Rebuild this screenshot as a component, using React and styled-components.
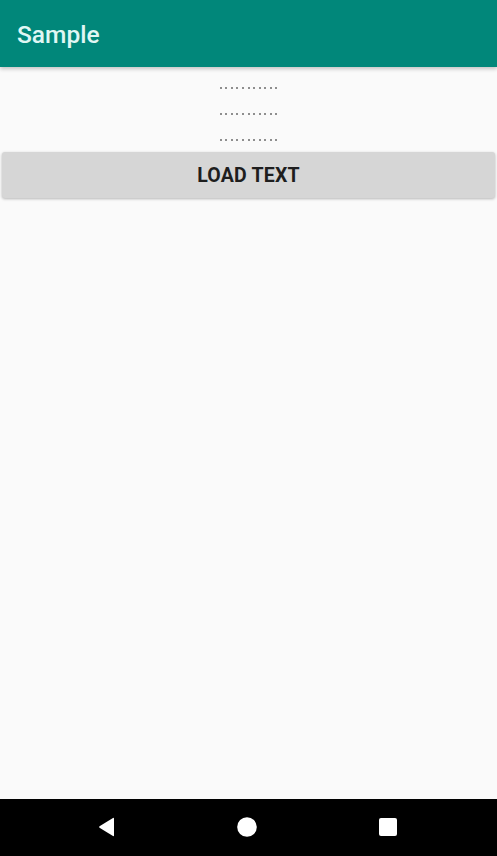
import React from "react";
import styled, { createGlobalStyle } from "styled-components";

const Global = createGlobalStyle`
  html, body {
    margin: 0;
    padding: 0;
    background: #fafafa;
    font-family: Roboto, "Noto Sans", sans-serif;
  }
`;

const Screen = styled.div`
  width: 497px;
  height: 856px;
  display: flex;
  flex-direction: column;
  background: #fafafa;
  overflow: hidden;
`;

const AppBar = styled.header`
  height: 67px;
  flex-shrink: 0;
  background: #01877a;
  display: flex;
  align-items: center;
  padding-left: 17px;
  box-shadow: 0 2px 4px rgba(0, 0, 0, 0.22);
  position: relative;
  z-index: 1;
`;

const Title = styled.h1`
  margin: 0;
  font-size: 24.5px;
  font-weight: 500;
  color: #e0f7f4;
  margin-top: 1px;
`;

const Content = styled.main`
  flex: 1;
  display: flex;
  flex-direction: column;
  align-items: center;
  padding: 10px 2px 0 2px;
`;

const Dots = styled.div`
  height: 26px;
  display: flex;
  gap: 3.6px;
  align-items: flex-start;
  padding-top: 10px;
  box-sizing: border-box;
`;

const Dot = styled.span`
  width: 2px;
  height: 2px;
  border-radius: 50%;
  background: #6a6a6a;
`;

const Button = styled.button`
  margin-top: -3px;
  align-self: stretch;
  height: 46px;
  border: none;
  border-radius: 3px;
  background: #d6d6d6;
  box-shadow: 0 1px 3px rgba(0, 0, 0, 0.28);
  font-family: Roboto, sans-serif;
  font-weight: 700;
  font-size: 19.5px;
  color: #1e1e1e;
  letter-spacing: 0.2px;
`;

const NavBar = styled.nav`
  height: 57px;
  flex-shrink: 0;
  background: #000;
  display: grid;
  grid-template-columns: 98px 18px 121px 20px 122px 18px;
  align-items: center;
`;

const Slot = styled.div`
  grid-column: ${(p) => p.col};
  display: flex;
  justify-content: center;
  align-items: center;
  margin-top: -1px;
`;

const rows = [0, 1, 2];
const dots = Array.from({ length: 11 });

export default function App() {
  return (
    <Screen>
      <Global />
      <AppBar>
        <Title>Sample</Title>
      </AppBar>
      <Content>
        {rows.map((r) => (
          <Dots key={r}>
            {dots.map((_, i) => (
              <Dot key={i} />
            ))}
          </Dots>
        ))}
        <Button>LOAD TEXT</Button>
      </Content>
      <NavBar>
        <Slot col={2}>
          <svg width="18" height="20" viewBox="0 0 18 20">
            <path d="M16 1.5 L16 18.5 Q16 19.5 15 19 L1.5 10.8 Q0.8 10 1.5 9.2 L15 1 Q16 0.5 16 1.5 Z" fill="#fff" />
          </svg>
        </Slot>
        <Slot col={4}>
          <svg width="20" height="20" viewBox="0 0 20 20">
            <circle cx="10" cy="10" r="9.8" fill="#fff" />
          </svg>
        </Slot>
        <Slot col={6}>
          <svg width="18" height="18" viewBox="0 0 18 18">
            <rect x="0" y="0" width="18" height="18" rx="2" fill="#fff" />
          </svg>
        </Slot>
      </NavBar>
    </Screen>
  );
}
